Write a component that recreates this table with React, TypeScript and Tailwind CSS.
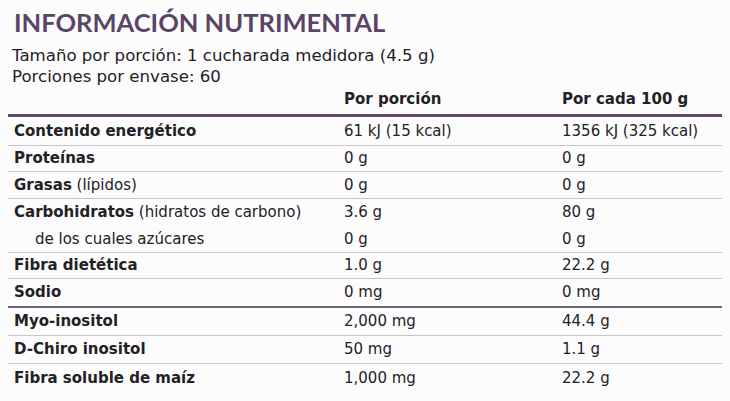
import React from 'react';

type Row = {
  name: string;
  extra?: string;
  perServing: string;
  per100: string;
  indent?: boolean;
  border: 'thin' | 'thick' | 'none';
  h: string;
};

const rows: Row[] = [
  { name: 'Contenido energético', perServing: '61 kJ (15 kcal)', per100: '1356 kJ (325 kcal)', border: 'thin', h: 'h-[29px]' },
  { name: 'Proteínas', perServing: '0 g', per100: '0 g', border: 'thin', h: 'h-[26px]' },
  { name: 'Grasas', extra: '(lípidos)', perServing: '0 g', per100: '0 g', border: 'thin', h: 'h-[27px]' },
  { name: 'Carbohidratos', extra: '(hidratos de carbono)', perServing: '3.6 g', per100: '80 g', border: 'none', h: 'h-[27px]' },
  { name: 'de los cuales azúcares', perServing: '0 g', per100: '0 g', indent: true, border: 'thin', h: 'h-[27px]' },
  { name: 'Fibra dietética', perServing: '1.0 g', per100: '22.2 g', border: 'thin', h: 'h-[26px]' },
  { name: 'Sodio', perServing: '0 mg', per100: '0 mg', border: 'thick', h: 'h-[29px]' },
  { name: 'Myo-inositol', perServing: '2,000 mg', per100: '44.4 g', border: 'thin', h: 'h-[28px]' },
  { name: 'D-Chiro inositol', perServing: '50 mg', per100: '1.1 g', border: 'thin', h: 'h-[28px]' },
  { name: 'Fibra soluble de maíz', perServing: '1,000 mg', per100: '22.2 g', border: 'none', h: 'h-[28px]' },
];

const borderClass = {
  thin: 'border-b border-[#c9c6cb]',
  thick: 'border-b-2 border-[#6f6478]',
  none: '',
};

export default function App() {
  return (
    <div className="w-[730px] h-[401px] bg-[#fdfcfd] text-[#232126] font-['DejaVu_Sans','Liberation_Sans',sans-serif] overflow-hidden">
      {/* Title */}
      <div className="pl-[14px] pt-[6px] h-[44px]">
        <h1 className="font-['Lato','Liberation_Sans',sans-serif] text-[25.5px] leading-[32px] font-bold text-[#5a4566]">
          INFORMACIÓN NUTRIMENTAL
        </h1>
      </div>

      <div className="pl-[12px] pt-[1px] text-[16.6px] leading-[21px] h-[43px]">
        <p>Tamaño por porción: 1 cucharada medidora (4.5 g)</p>
        <p>Porciones por envase: 60</p>
      </div>

      {/* Table */}
      <div className="px-[8px]">
        <div className="grid grid-cols-[329px_219px_170px] h-[30px] text-[15px] font-bold border-b-[3px] border-[#5e4a6e]">
          <div />
          <div className="pl-[7px] pt-[1px]">Por porción</div>
          <div className="pl-[6px] pt-[1px]">Por cada 100 g</div>
        </div>

        {rows.map((r) => (
          <div
            key={r.name}
            className={`grid grid-cols-[329px_219px_170px] items-center text-[15px] ${r.h} ${borderClass[r.border]}`}
          >
            <div className={r.indent ? 'pl-[27px]' : 'pl-[6px]'}>
              <span className={r.indent ? '' : 'font-bold'}>{r.name}</span>
              {r.extra && <span> {r.extra}</span>}
            </div>
            <div className="pl-[7px]">{r.perServing}</div>
            <div className="pl-[6px]">{r.per100}</div>
          </div>
        ))}
      </div>
    </div>
  );
}
